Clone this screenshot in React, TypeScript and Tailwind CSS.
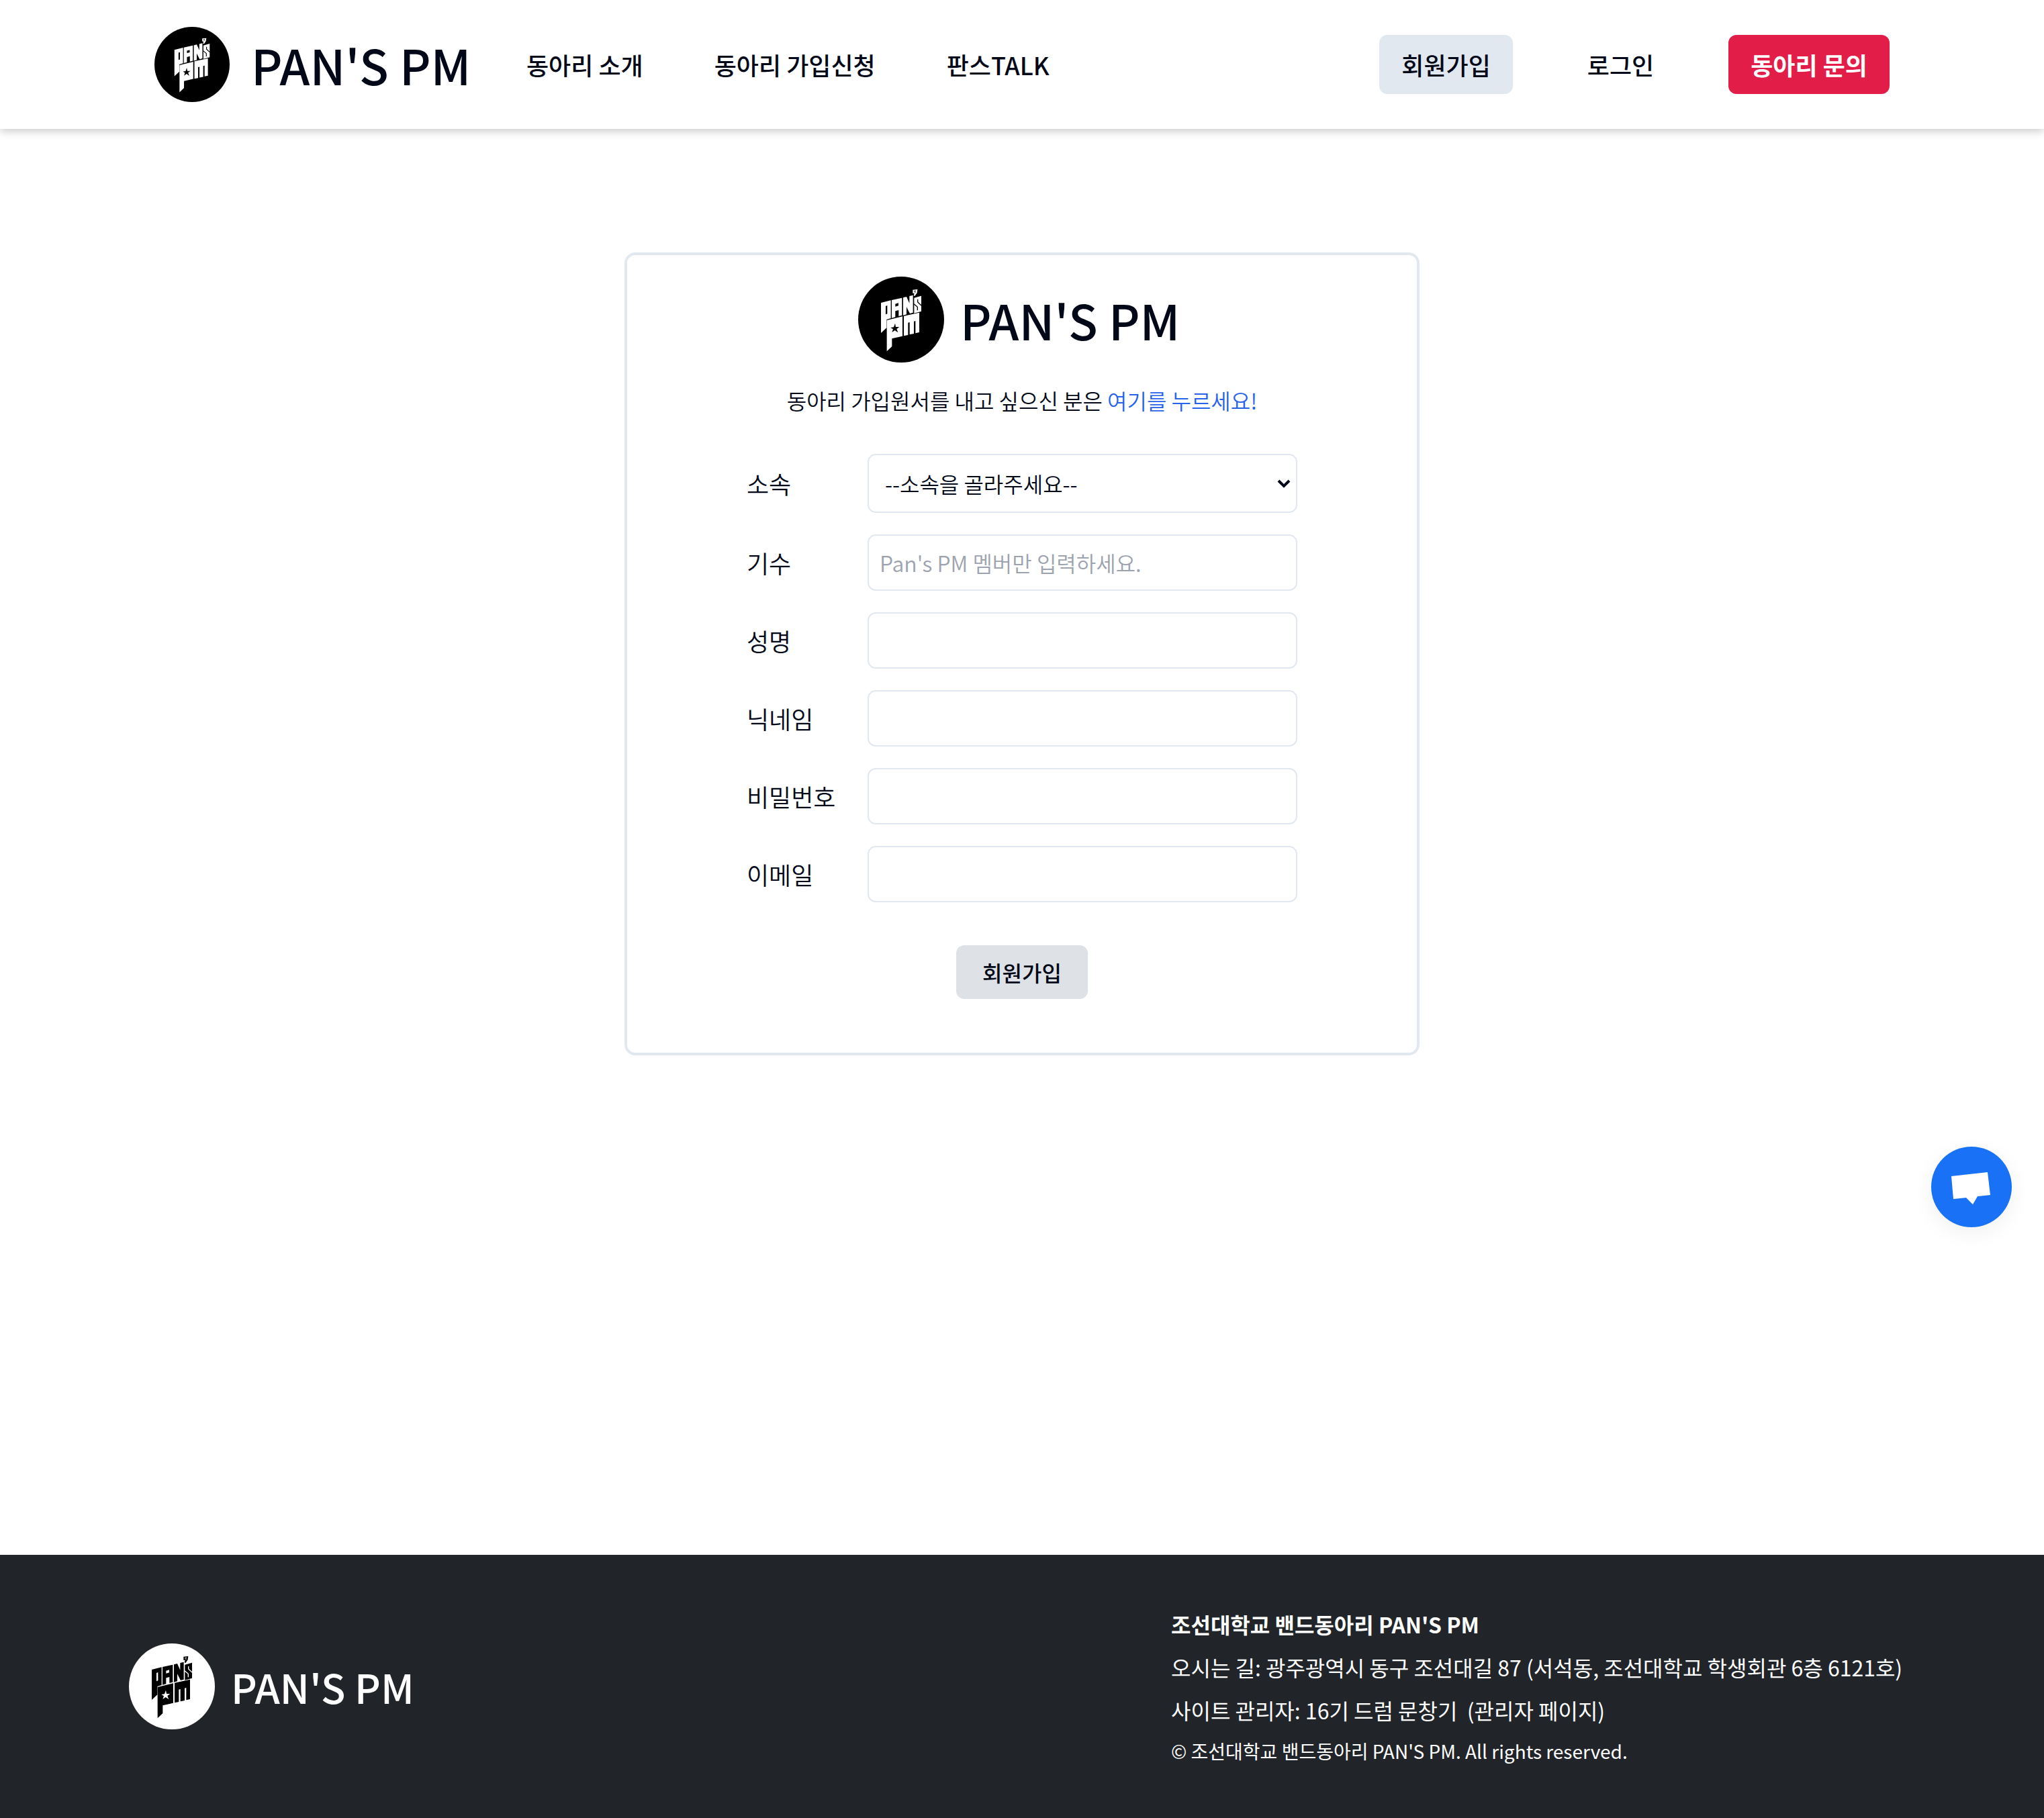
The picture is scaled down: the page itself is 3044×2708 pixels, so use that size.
import type { ReactNode } from "react";

const disc = { dark: "fill-black", light: "fill-white" };
const ink = { dark: "fill-[#fdfdfd]", light: "fill-black" };
const slit = { dark: "fill-none stroke-black", light: "fill-none stroke-white" };

function Emblem({ tone, className }: { tone: "dark" | "light"; className: string }) {
  const bg = disc[tone];
  const fg = ink[tone];
  return (
    <svg viewBox="54 36 384 384" className={className} role="img" aria-label="PAN'S PM 로고">
      <circle cx="246" cy="228" r="192" className={bg} />
      {/* upper banner */}
      <path className={fg} d="M156 153L200 142V222L181 228V265L156 288Z" />
      <path className={fg} d="M204 141L250 131V209L235 213V186L220 190V217L204 221Z" />
      <path className={fg} d="M255 130L270 126L283 155V123L299 119V197L285 201L270 172V205L255 209Z" />
      <path className={fg} d="M304 131L336 122V191L304 200Z" />
      <path className={slit[tone]} strokeWidth="4" d="M320 138V150L337 166M303 158L319 172V187" />
      <path className={fg} d="M298 95L319 93L317 109L307 123L302 121L305 111L298 110Z" />
      <path className={slit[tone]} strokeWidth="2" d="M304 100L311 99L305 105L312 106" />
      <path className={bg} d="M177 168L184 165V202L177 205Z M220 158L234 154V166L220 170Z" />
      {/* lower banner */}
      <path className={fg} d="M182 231L252 214V302L205 313V348L182 370Z" />
      <path className={fg} d="M258 212L327 197V285L310 289V234L303 236V291L284 295V240L277 242V297L258 301Z" />
      <path className={bg} d="M219 245L222 261L238 261L226 270L232 286L218 276L205 285L210 271L199 264L213 262Z" />
    </svg>
  );
}

function NavLink({ children }: { children: ReactNode }) {
  return (
    <a href="#" className="whitespace-nowrap">
      {children}
    </a>
  );
}

const fields = [
  { id: "generation", label: "기수", type: "text", placeholder: "Pan's PM 멤버만 입력하세요." },
  { id: "name", label: "성명", type: "text" },
  { id: "nickname", label: "닉네임", type: "text" },
  { id: "password", label: "비밀번호", type: "password" },
  { id: "email", label: "이메일", type: "email" },
];

export default function App() {
  return (
    <div className="relative flex min-h-screen flex-col bg-white font-['Noto_Sans_CJK_KR',sans-serif] text-[32px] leading-[48px] text-[#020817]">
      <header className="flex h-48 items-center justify-between bg-white px-[230px] text-[36px] leading-14 font-medium shadow-[0_4px_12px_rgba(0,0,0,0.2)]">
        <div className="flex items-center">
          <a href="#" className="flex items-center gap-8">
            <Emblem tone="dark" className="size-28" />
            <span className="w-[336px] text-[72px] leading-20 whitespace-nowrap">PAN'S PM</span>
          </a>
          <nav className="ml-[74px] flex gap-[106px]">
            <NavLink>동아리 소개</NavLink>
            <NavLink>동아리 가입신청</NavLink>
            <NavLink>판스TALK</NavLink>
          </nav>
        </div>
        <div className="flex gap-[78px]">
          <button type="button" className="rounded-xl bg-slate-200 px-[33px] py-4">회원가입</button>
          <button type="button" className="rounded-xl px-[33px] py-4">로그인</button>
          <button type="button" className="rounded-xl bg-[#e11d48] px-[33px] py-4 font-bold text-white">동아리 문의</button>
        </div>
      </header>

      <main className="flex flex-1 flex-col items-center pt-[184px]">
        <section className="flex w-full max-w-[1184px] flex-col items-center rounded-2xl border-4 border-slate-200 pt-8 pb-20 font-[350]">
          <div className="flex items-center gap-6">
            <Emblem tone="dark" className="size-32" />
            <h1 className="w-[336px] text-[72px] leading-20 font-medium whitespace-nowrap">PAN'S PM</h1>
          </div>
          <p className="mt-8">
            동아리 가입원서를 내고 싶으신 분은{" "}
            <a href="#" className="text-[#2563eb]">여기를 누르세요!</a>
          </p>
          <form className="mt-14 flex w-full max-w-[820px] flex-col gap-8">
            <div className="flex items-center">
              <label htmlFor="group" className="w-[180px] text-[36px]">소속</label>
              <div className="relative min-w-0 flex-1">
                <select id="group" className="h-22 w-full appearance-none rounded-xl border-2 border-slate-200 bg-white px-6 text-[#020817]">
                  <option>--소속을 골라주세요--</option>
                </select>
                <svg viewBox="0 0 20 14" className="pointer-events-none absolute top-[38px] right-2.5 h-3.5 w-5 fill-none stroke-[#020817]">
                  <path strokeWidth="4" d="M2 2L10 10L18 2" />
                </svg>
              </div>
            </div>
            {fields.map((f) => (
              <div key={f.id} className="flex items-center">
                <label htmlFor={f.id} className="w-[180px] text-[36px]">{f.label}</label>
                <input
                  id={f.id}
                  type={f.type}
                  placeholder={f.placeholder}
                  className="h-21 min-w-0 flex-1 rounded-xl border-2 border-slate-200 bg-white px-4 placeholder:text-[#9ca3af]"
                />
              </div>
            ))}
            <button type="submit" className="mt-8 w-[196px] self-center rounded-xl bg-[#dee2e6] py-4 font-medium">
              회원가입
            </button>
          </form>
        </section>
      </main>

      <footer className="flex h-98 items-center justify-between bg-[#212529] px-48 text-white">
        <div className="flex items-center gap-6">
          <Emblem tone="light" className="size-32" />
          <span className="text-[60px] leading-20 font-medium">PAN'S PM</span>
        </div>
        <div className="flex w-[1108px] flex-col gap-4">
          <p className="font-bold">조선대학교 밴드동아리 PAN'S PM</p>
          <p>오시는 길: 광주광역시 동구 조선대길 87 (서석동, 조선대학교 학생회관 6층 6121호)</p>
          <p>
            사이트 관리자: 16기 드럼 문창기&nbsp; <a href="#">(관리자 페이지)</a>
          </p>
          <p className="text-[28px] leading-[42px]">© 조선대학교 밴드동아리 PAN'S PM. All rights reserved.</p>
        </div>
      </footer>

      <button
        type="button"
        aria-label="채팅 상담"
        className="absolute top-[1708px] right-12 size-30 rounded-full bg-[#1972f5] shadow-[0_8px_32px_rgba(0,0,0,0.06)]"
      >
        <svg viewBox="0 0 120 120" className="size-full fill-white">
          <path d="M30 44L84 38L88 72L69 74L62 86L52 76L33 78Z" />
        </svg>
      </button>
    </div>
  );
}
